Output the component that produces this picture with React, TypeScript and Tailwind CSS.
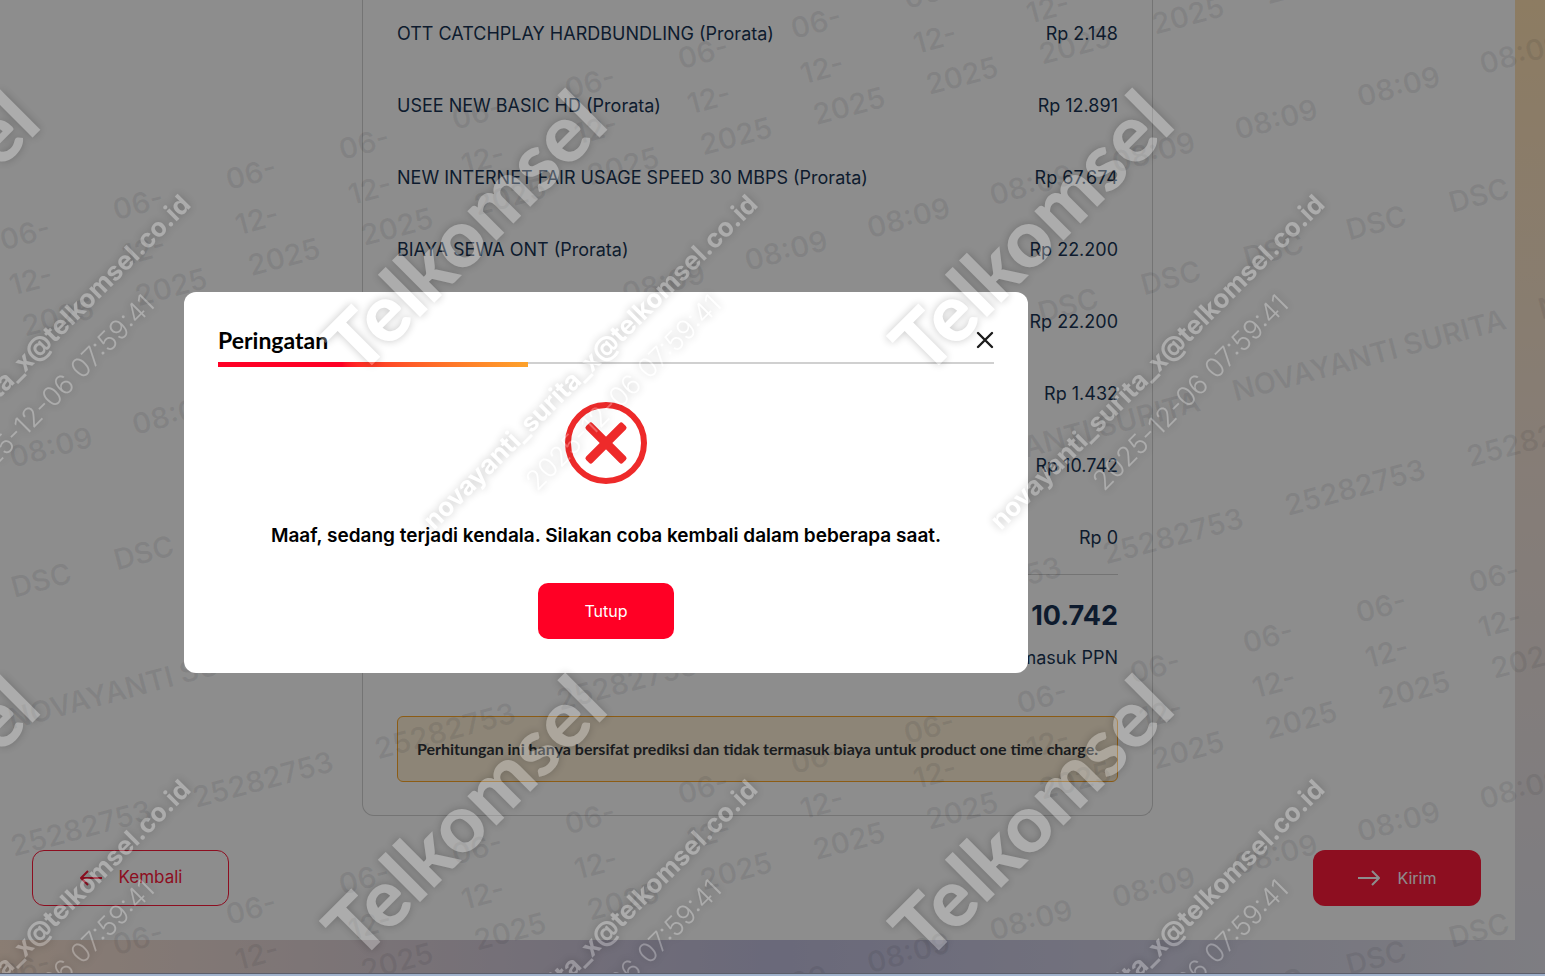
interface ICharge {
  id: number;
  label: string;
  price: string;
}

interface IStamp {
  text: string;
  x: number;
  y: number;
  stepX: number;
  stepY: number;
}

const charges: ICharge[] = [
  { id: 1, label: "OTT CATCHPLAY HARDBUNDLING (Prorata)", price: "Rp 2.148" },
  { id: 2, label: "USEE NEW BASIC HD (Prorata)", price: "Rp 12.891" },
  { id: 3, label: "NEW INTERNET FAIR USAGE SPEED 30 MBPS (Prorata)", price: "Rp 67.674" },
  { id: 4, label: "BIAYA SEWA ONT (Prorata)", price: "Rp 22.200" },
  { id: 5, label: "", price: "Rp 22.200" },
  { id: 6, label: "", price: "Rp 1.432" },
  { id: 7, label: "", price: "Rp 10.742" },
  { id: 8, label: "", price: "Rp 0" },
];

// Each stamp repeats along its own slanted line
const stamps: IStamp[] = [
  { text: "06-", x: 25, y: 234, stepX: 113, stepY: -30.2 },
  { text: "12-", x: 31, y: 280, stepX: 113, stepY: -30.2 },
  { text: "2025", x: 58, y: 317, stepX: 113, stepY: -30.2 },
  { text: "08:09", x: 51, y: 447, stepX: 122.5, stepY: -32.8 },
  { text: "DSC", x: 41, y: 580, stepX: 102.7, stepY: -27.5 },
  { text: "NOVAYANTI SURITA", x: 145, y: 683, stepX: 306, stepY: -82 },
  { text: "25282753", x: 81, y: 828, stepX: 182, stepY: -48.7 },
];

const steps = Array.from({ length: 16 }, (_, i) => i);

// Grey user stamps printed on the page, below the backdrop
function PageStamps() {
  return (
    <svg aria-hidden="true" className="pointer-events-none absolute inset-0 h-full w-full font-['Inter',sans-serif]">
      {[0, 735].map((shift) =>
        stamps.map((stamp) =>
          steps.map((i) => {
            const x = stamp.x + stamp.stepX * i;
            const y = stamp.y + stamp.stepY * i + shift;
            if (x > 1690 || y < -20 || y > 1020) return null;
            return (
              <text
                key={`${stamp.text}${shift}${i}`}
                transform={`translate(${x} ${y}) rotate(-15)`}
                textAnchor="middle"
                dominantBaseline="central"
                className="fill-[#1c1c2a]/9 text-[29px] font-semibold"
              >
                {stamp.text}
              </text>
            );
          }),
        ),
      )}
    </svg>
  );
}

// White diagonal watermark, drawn on top of everything
function BrandWatermark() {
  const tiles = [-567, 0, 567].flatMap((x) => [0, 585].map((y) => ({ x, y })));

  return (
    <svg aria-hidden="true" className="pointer-events-none absolute inset-0 h-full w-full opacity-27 drop-shadow-[0_0_4px_rgba(0,0,0,0.8)]">
      {tiles.map(({ x, y }) => (
        <g key={`${x}-${y}`} transform={`translate(${x} ${y})`} className="fill-white">
          <text transform="translate(359 378) rotate(-45)" className="font-['Lato',sans-serif] text-[80px] font-black">
            Telkomsel
          </text>
          <text transform="translate(434 531) rotate(-45)" className="font-['Inter',sans-serif] text-[26px] font-bold">
            novayanti_surita_x@telkomsel.co.id
          </text>
          <text transform="translate(537 492) rotate(-45)" className="font-['Inter',sans-serif] text-[27px] font-light">
            2025-12-06 07:59:41
          </text>
        </g>
      ))}
    </svg>
  );
}

function ArrowIcon({ className }: { className: string }) {
  return (
    <svg viewBox="0 0 24 24" fill="none" stroke="currentColor" strokeWidth="2" strokeLinejoin="round" className={className}>
      <path d="M1 12H22M15 5l7 7-7 7" />
    </svg>
  );
}

function App() {
  return (
    <main className="relative flex min-h-screen flex-col overflow-hidden font-['Inter',sans-serif]">
      <div className="flex">
        <div className="flex flex-1 flex-col bg-white pb-[34px]">
          {/* Bill summary card */}
          <section className="mx-auto w-full max-w-[791px] rounded-b-xl border border-t-0 border-[#ccc] px-[34px] pt-5 pb-[33px] text-lg leading-7 text-[#001a41]">
            <ul className="flex flex-col gap-11">
              {charges.map((charge) => (
                <li key={charge.id} className="flex justify-between">
                  <span>{charge.label}</span>
                  <span>{charge.price}</span>
                </li>
              ))}
            </ul>
            <div className="mt-[22px] flex flex-col items-end border-t border-[#ccc] pt-[21px]">
              <strong className="text-[27px] leading-10">Rp 10.742</strong>
              <span className="mt-2">Termasuk PPN</span>
            </div>
            <p className="mt-11 rounded-md border border-[#fd9c0f] bg-[#feeed2] px-4 py-5 text-center font-['Lato',sans-serif] text-base leading-6 font-bold text-[#181c24]">
              Perhitungan ini hanya bersifat prediksi dan tidak termasuk biaya untuk product one time charge.
            </p>
          </section>

          {/* Page navigation */}
          <div className="mt-[34px] flex justify-between pr-[34px] pl-8">
            <button type="button" className="flex h-14 w-[197px] items-center justify-center gap-4 rounded-xl border border-[#ff0025] text-[17px] text-[#ff0025]">
              <ArrowIcon className="h-6 w-6 rotate-180" />
              Kembali
            </button>
            <button type="button" className="flex h-14 w-[168px] items-center justify-center gap-4 rounded-xl bg-[#ff0025] text-base text-white">
              <ArrowIcon className="h-6 w-6" />
              Kirim
            </button>
          </div>
        </div>
        <div className="w-[30px] bg-linear-to-b from-[#fedca8] via-[#f0dfd2] to-[#e0dfe8]" />
      </div>
      <div className="flex-1 bg-linear-to-r from-[#f8deca] via-[#b8b6d8] to-[#e0dfe8]" />

      <PageStamps />

      {/* Warning dialog */}
      <div className="absolute inset-0 bg-[#1c1c1c]/50 pt-[292px] pl-[184px]">
        <div role="dialog" aria-labelledby="warning-title" className="flex w-[844px] flex-col items-center rounded-xl bg-white p-[34px] text-black">
          <header className="w-full">
            <div className="flex h-7 items-center justify-between">
              <h2 id="warning-title" className="font-['Lato',sans-serif] text-[23px] font-bold">
                Peringatan
              </h2>
              <button type="button" aria-label="Tutup">
                <svg viewBox="0 0 18 18" fill="none" stroke="#1c1c1c" strokeWidth="2.4" strokeLinecap="round" className="h-[18px] w-[18px]">
                  <path d="M2 2l14 14M16 2L2 16" />
                </svg>
              </button>
            </div>
            <div className="mt-2 h-[5px]">
              <div className="h-0.5 bg-[#d0d0d0]">
                <div className="h-[5px] w-2/5 bg-linear-to-r from-[#ff0025] from-40% to-[#fda22b]" />
              </div>
            </div>
          </header>
          <svg viewBox="0 0 82 82" fill="none" className="mt-[35px] h-[82px] w-[82px]">
            <circle cx="41" cy="41" r="38" stroke="#ee2a2a" strokeWidth="6" />
            <g fill="#ee2a2a">
              <rect x="15" y="36.5" width="52" height="9" rx="2.5" transform="rotate(45 41 41)" />
              <rect x="15" y="36.5" width="52" height="9" rx="2.5" transform="rotate(-45 41 41)" />
            </g>
          </svg>
          <p className="mt-[38px] text-[19px] leading-7 font-semibold">Maaf, sedang terjadi kendala. Silakan coba kembali dalam beberapa saat.</p>
          <button type="button" className="mt-[33px] h-14 w-[136px] rounded-[10px] bg-[#ff0025] text-base text-white">
            Tutup
          </button>
        </div>
      </div>

      <BrandWatermark />

      {/* Window edge */}
      <div className="relative h-[3px] border-t border-[#5c5d68] bg-[#a0b2cc]" />
    </main>
  );
}

export default App;
